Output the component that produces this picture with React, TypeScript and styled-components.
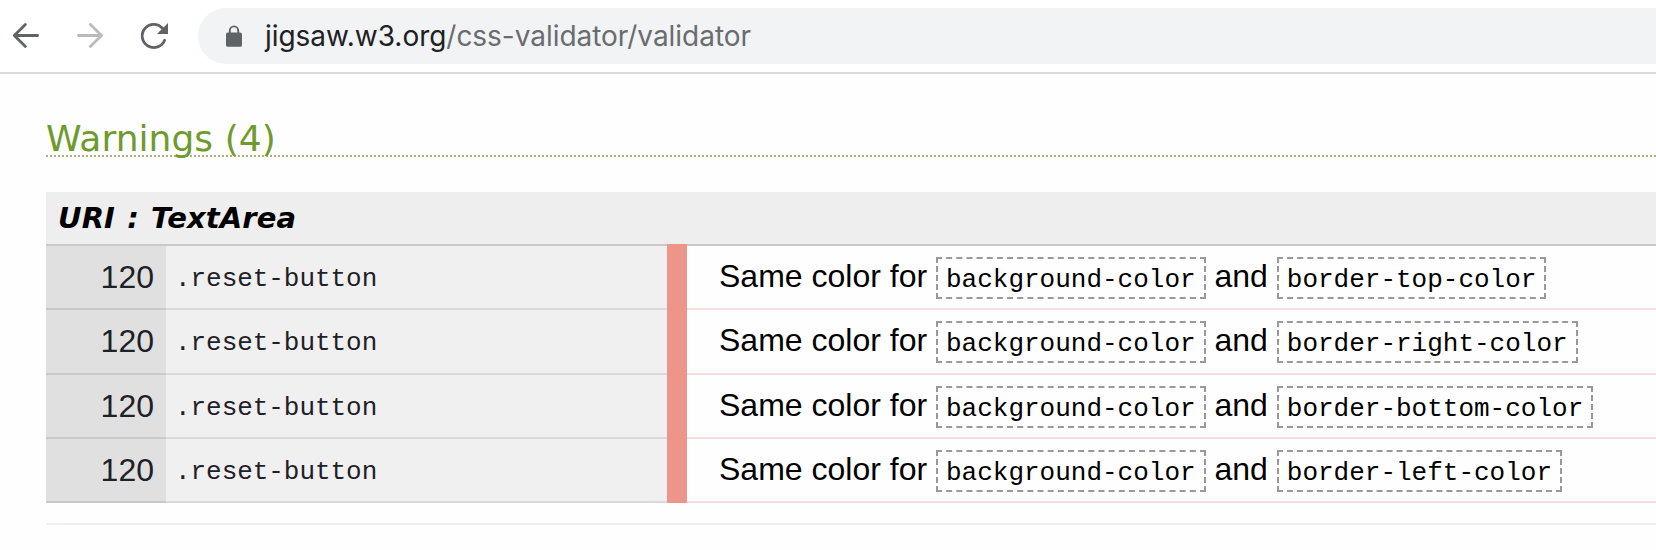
import React from "react";
import styled, { createGlobalStyle } from "styled-components";

const GlobalStyle = createGlobalStyle`
  * { box-sizing: border-box; }
  body { margin: 0; background: #fefefe; overflow: hidden; }
`;

const Page = styled.div`
  height: 550px;
  overflow: hidden;
  color: #000;
  font-family: "Liberation Sans", Arial, sans-serif;
`;

const Toolbar = styled.header`
  display: flex;
  align-items: center;
  height: 74px;
  padding-left: 8px;
  border-bottom: 2px solid #dadbdc;
  background: #fff;
`;

const NavButton = styled.button<{ $muted?: boolean }>`
  display: flex;
  align-items: center;
  justify-content: center;
  width: 36px;
  height: 36px;
  margin-right: 28px;
  padding: 0;
  border: 0;
  background: none;
  color: ${(p) => (p.$muted ? "#babbbd" : "#5f6368")};

  &:last-of-type { margin-right: 26px; }
`;

const AddressBar = styled.div`
  display: flex;
  align-items: center;
  flex: 1;
  height: 56px;
  padding-left: 28px;
  border-radius: 28px 0 0 28px;
  background: #f1f3f4;
`;

const LockIcon = styled.svg`
  flex: none;
  margin-right: 23px;
`;

const Url = styled.div`
  color: #6a6c6f;
  font: 28px/40px Inter, sans-serif;
  letter-spacing: -0.04px;
  white-space: nowrap;
`;

const Host = styled.span`
  color: #202124;
`;

const Report = styled.main`
  padding: 40px 0 0 46px;
`;

const Heading = styled.h3`
  height: 43px;
  margin: 0 0 35px;
  background: repeating-linear-gradient(90deg, #a9b57a 0 2px, transparent 2px 4px) 0 100% / 100% 2px no-repeat;
  color: #6f9a2d;
  font: 400 36px/50px "DejaVu Sans", Verdana, sans-serif;
  letter-spacing: 0.05px;
`;

const Source = styled.h4`
  height: 54px;
  margin: 0;
  padding-left: 12px;
  border-bottom: 2px solid #c9c9c9;
  background: #eee;
  font: italic 700 29px/52px "DejaVu Sans", Verdana, sans-serif;
  letter-spacing: 0.1px;
  word-spacing: 2px;
`;

const WarningRow = styled.div`
  display: grid;
  grid-template-columns: 120px 501px 20px 1fr;
  grid-template-rows: 64.25px;
`;

const LineNumber = styled.div`
  padding: 1px 12px 0 0;
  border-bottom: 2px solid #c9c9c9;
  background: #e0e0e0;
  color: #1f2128;
  font-size: 32px;
  line-height: 60px;
  text-align: right;
`;

const Selector = styled.div`
  padding: 4px 0 0 9px;
  border-bottom: 2px solid #dadada;
  background: #f0f0f0;
  color: #1f2128;
  font: 26px/58px "Liberation Mono", "Courier New", monospace;
  letter-spacing: -0.05px;
`;

const Marker = styled.div`
  position: relative;
  margin-top: -2px;
  background: #ed9589;
`;

const Message = styled.div`
  padding-left: 32px;
  border-bottom: 2px solid #f8deda;
  font-size: 32px;
  line-height: 60px;
  white-space: nowrap;
`;

const Code = styled.code`
  display: inline-block;
  padding: 6px 8px 2px;
  border: 2px dashed #999;
  font: 26px/30px "Liberation Mono", "Courier New", monospace;
`;

const Divider = styled.div`
  height: 2px;
  margin-top: 20px;
  background: #eeeefe;
`;

const warnings = [
  { line: 120, selector: ".reset-button", first: "background-color", second: "border-top-color" },
  { line: 120, selector: ".reset-button", first: "background-color", second: "border-right-color" },
  { line: 120, selector: ".reset-button", first: "background-color", second: "border-bottom-color" },
  { line: 120, selector: ".reset-button", first: "background-color", second: "border-left-color" },
];

const stroke = {
  fill: "none",
  stroke: "currentColor",
  strokeWidth: 2.8,
  strokeLinecap: "round" as const,
  strokeLinejoin: "round" as const,
};

export default function App() {
  return (
    <Page>
      <GlobalStyle />
      <Toolbar>
        <NavButton aria-label="Back">
          <svg width="36" height="36" {...stroke}>
            <path d="M29.6 17.5H7M17.4 6.4 6.3 17.5l11.1 11.1" />
          </svg>
        </NavButton>
        <NavButton $muted aria-label="Forward">
          <svg width="36" height="36" {...stroke}>
            <path d="M6.4 17.5H29M18.4 6.4l11.1 11.1-11.1 11.1" />
          </svg>
        </NavButton>
        <NavButton aria-label="Reload">
          <svg width="36" height="36" {...stroke}>
            <path d="M28.6 22.2A11.6 11.6 0 1 1 26.4 10.2" />
            <path d="M32 5v11H21z" fill="currentColor" stroke="none" />
          </svg>
        </NavButton>
        <AddressBar>
          <LockIcon width="16" height="22">
            <path d="M3.8 8.5V5.6a4.2 4.2 0 0 1 8.4 0v2.9" fill="none" stroke="#5f6368" strokeWidth="1.9" />
            <rect y="7.5" width="16" height="14.3" rx="1.9" fill="#5f6368" />
          </LockIcon>
          <Url>
            <Host>jigsaw.w3.org</Host>/css-validator/validator
          </Url>
        </AddressBar>
      </Toolbar>
      <Report>
        <Heading>Warnings (4)</Heading>
        <Source>URI : TextArea</Source>
        {warnings.map((w) => (
          <WarningRow key={w.second}>
            <LineNumber>{w.line}</LineNumber>
            <Selector>{w.selector}</Selector>
            <Marker />
            <Message>
              Same color for <Code>{w.first}</Code> and <Code>{w.second}</Code>
            </Message>
          </WarningRow>
        ))}
        <Divider />
      </Report>
    </Page>
  );
}
